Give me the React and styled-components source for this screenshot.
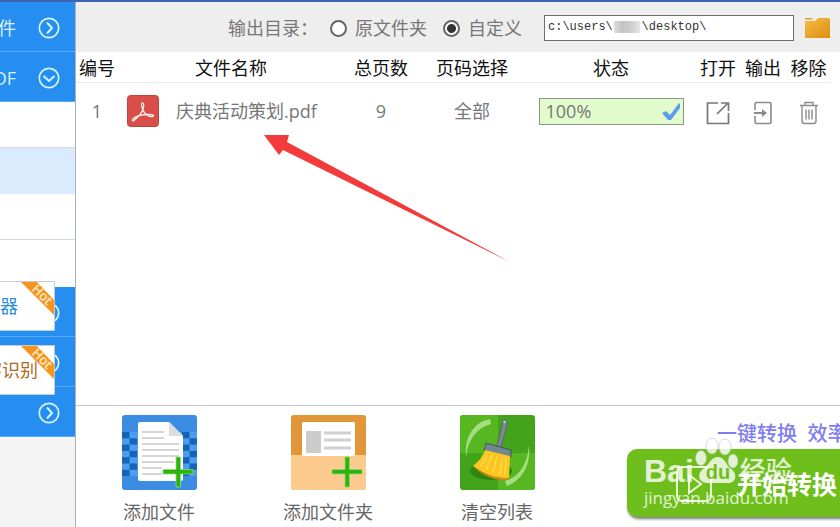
import React, { useState } from 'react';
import styled, { createGlobalStyle } from 'styled-components';

const GlobalStyle = createGlobalStyle`
  * {
    box-sizing: border-box;
  }
  body {
    margin: 0;
    background: #fff;
    font-family: "Open Sans", "Noto Sans CJK SC", sans-serif;
    font-size: 18px;
    line-height: 26px;
    color: #777;
  }
  button, input {
    font-family: inherit;
    font-size: inherit;
    line-height: inherit;
    color: inherit;
    margin: 0;
  }
  svg {
    flex: none;
  }
`

const Page = styled.div`
  position: relative;
  display: flex;
  min-height: 100vh;
  border-top: 2px solid #3f63b3;
  overflow: hidden;
`

const Sidebar = styled.nav`
  position: relative;
  flex: none;
  width: 76px;
  border-right: 1px solid #a9b3bd;
  background: #f3f3f3;
`

const Group = styled.button`
  display: flex;
  align-items: center;
  justify-content: flex-end;
  gap: 22px;
  width: 100%;
  height: 50px;
  padding: 2px 15px 0 0;
  border: 0;
  border-bottom: 1px solid #55aaf7;
  background: #268ef0;
  color: #d9f3ff;
  white-space: nowrap;
  overflow: hidden;
`

const SubItem = styled.a`
  display: block;
  height: ${p => (p.$last ? 47 : 46)}px;
  border-bottom: ${p => (p.$last ? 0 : 1)}px solid ${p => (p.$active ? '#d9ebfd' : '#d5d9dd')};
  background: ${p => (p.$active ? '#d9ebfd' : '#fff')};
`

const Promos = styled.div`
  position: absolute;
  top: 279px;
  left: 0;
  display: flex;
  flex-direction: column;
  gap: 14px;
`

const Promo = styled.a`
  position: relative;
  display: flex;
  align-items: center;
  justify-content: flex-end;
  width: 55px;
  height: 50px;
  padding-right: ${p => p.$pad}px;
  border: 1px solid #c3ccd4;
  border-left: 0;
  background: #fff;
  color: ${p => p.$color};
  text-decoration: none;
  white-space: nowrap;
  overflow: hidden;
`

const Ribbon = styled.svg`
  position: absolute;
  top: 0;
  right: 0;
`

const Main = styled.main`
  flex: 1;
  min-width: 0;
  display: flex;
  flex-direction: column;
`

const Toolbar = styled.div`
  display: flex;
  align-items: center;
  height: 50px;
  padding: 2px 10px 0 152px;
  background: #eee;
  white-space: nowrap;
`

const Choices = styled.div`
  display: flex;
  gap: 16px;
  margin-left: 12px;
`

const Choice = styled.label`
  display: flex;
  align-items: center;
  gap: 8px;
`

const Radio = styled.input`
  appearance: none;
  width: 17px;
  height: 17px;
  border: 2px solid #666;
  border-radius: 50%;
  background: #fff;
  &:checked {
    background: radial-gradient(circle, #333 4px, #fff 5px);
  }
`

const PathBox = styled.div`
  position: relative;
  flex: 1;
  min-width: 0;
  display: flex;
  margin: 0 10px 0 22px;
`

const PathInput = styled.input`
  width: 100%;
  height: 26px;
  padding: 0 3px 2px;
  border: 1px solid #6e6e6e;
  border-radius: 0;
  background: #fff;
  color: #333;
  font-family: "Liberation Mono", monospace;
  font-size: 12px;
`

const Smudge = styled.span`
  position: absolute;
  left: 70px;
  top: 6px;
  width: 26px;
  height: 12px;
  background: linear-gradient(90deg, #ddd, #c4c4c4 30%, #ccc 60%, #e4e4e4);
`

const IconButton = styled.button`
  display: inline-flex;
  padding: 0;
  border: 0;
  background: none;
  vertical-align: middle;
`

const Files = styled.table`
  width: calc(100% - 9px);
  table-layout: fixed;
  border-collapse: collapse;
`

const Th = styled.th`
  width: ${p => (p.$w ? p.$w + 'px' : 'auto')};
  height: 30px;
  padding: 3px 0 0;
  border-bottom: 1px solid #e8ebee;
  color: #111;
  font-weight: 400;
  text-align: center;
  white-space: nowrap;
`

const Td = styled.td`
  height: 58px;
  padding: 0;
  text-align: center;
`

const FileName = styled.div`
  display: flex;
  align-items: center;
  gap: 17px;
  padding-left: 9px;
  white-space: nowrap;
`

const Progress = styled.div`
  display: flex;
  align-items: center;
  justify-content: space-between;
  width: 145px;
  height: 27px;
  margin: 0 auto;
  padding: 0 1px 0 6px;
  border: 1px solid #8c9788;
  background: #e2fbcd;
`

const Footer = styled.footer`
  display: flex;
  height: 122px;
  margin-top: auto;
  padding-left: 38px;
  border-top: 1px solid #c6c6c6;
  overflow: hidden;
`

const Tools = styled.div`
  display: flex;
  flex: none;
  gap: 79px;
`

const Tool = styled.button`
  display: flex;
  flex-direction: column;
  align-items: center;
  gap: 9px;
  width: 90px;
  padding: 9px 0 0;
  border: 0;
  background: none;
  color: #666;
  white-space: nowrap;
`

const Action = styled.div`
  position: relative;
  flex: none;
  width: 240px;
  margin-left: 85px;
  padding-top: 13px;
`

const Slogan = styled.div`
  padding-left: 90px;
  color: #807df0;
  font-size: 20px;
  font-weight: 500;
  line-height: 30px;
  white-space: pre;
`

const Start = styled.button`
  display: flex;
  align-items: center;
  gap: 24px;
  width: 100%;
  height: 68px;
  padding: 2px 0 0 48px;
  border: 0;
  border-radius: 10px;
  background: #6fbf1c;
  box-shadow: 1px 2px 3px #777;
  color: #fff;
  font-size: 25px;
  font-weight: 700;
  white-space: nowrap;
`

const Watermark = styled.div`
  position: absolute;
  left: 17px;
  top: 29px;
  opacity: 0.8;
  color: #fff;
  pointer-events: none;
`

const Brand = styled.div`
  display: flex;
  align-items: flex-end;
  height: 52px;
  font-family: "Liberation Sans", "Noto Sans CJK SC", sans-serif;
  font-size: 32px;
  font-weight: 700;
  line-height: 32px;
`

const BrandZh = styled.span`
  font-size: 26px;
  font-weight: 500;
`

const Site = styled.div`
  font-size: 17px;
  line-height: 22px;
`

const Pointer = styled.svg`
  position: absolute;
  left: 263px;
  top: 132px;
  pointer-events: none;
`

const Circle = ({ down }) => (
  <svg width="22" height="22" viewBox="0 0 22 22" fill="none" stroke="#d5f5ff" strokeWidth="2">
    <circle cx="11" cy="11" r="9.700" strokeWidth="1.700" />
    <path d={down ? 'M5.5 9 L11 14 L16.5 9' : 'M9 5.5 L14 11 L9 16.5'} />
  </svg>
)

const Hot = () => (
  <Ribbon width="33" height="34" viewBox="0 0 33 34" aria-hidden="true">
    <path d="M0 0H16L33 18V33Z" fill="#f7941d" />
    <text x="21" y="17" fill="#ffe9c4" fontSize="13" fontFamily="Open Sans" fontWeight="600" textAnchor="middle" transform="rotate(45 21 13)">Hot</text>
  </Ribbon>
)

const Plus = () => (
  <path d="M54 42h4.500v12.500H71v4.500H58.500v13H54V59H41v-4.500h13z" fill="#2eb40e" stroke="#8fd873" strokeWidth=".8" />
)

const PdfIcon = () => (
  <svg width="32" height="32" viewBox="0 0 32 32">
    <rect x=".5" y=".5" width="31" height="31" rx="3" fill="#d84e49" stroke="#bd4540" />
    <path d="M15 8c2-1 2 3 1 6-1 4-6 9-9 11.500-1 .8-2 .3-1.500-.8 1-2 5-3.700 9-4.700 4-.7 11-.8 12 .5.6 1-1.500 1.500-4 .8-3-1-6-4.500-7-7.500-.7-2-1.500-5-.5-5.800z" fill="none" stroke="#fde8e5" strokeWidth="1.300" />
  </svg>
)

const FolderIcon = () => (
  <svg width="26" height="22" viewBox="0 0 26 22">
    <defs>
      <linearGradient id="fold" x1="0" y1="0" x2="1" y2="1">
        <stop offset="0" stopColor="#f6bd43" />
        <stop offset="1" stopColor="#dc8d13" />
      </linearGradient>
    </defs>
    <path d="M1 1h7l1 1.500H1z" fill="#e0a238" />
    <path d="M1 4h10l3-3h10q2 0 2 2v18H1z" fill="url(#fold)" />
  </svg>
)

const CheckIcon = () => (
  <svg width="22" height="21" viewBox="0 0 22 21">
    <path d="M2 12l4-2 4 4L19 2l1 1v4l-9 12H8z" fill="#5c9de8" />
  </svg>
)

const OpenIcon = () => (
  <svg width="24" height="24" viewBox="0 0 24 24" fill="none" stroke="#777" strokeWidth="1.700">
    <path d="M12 2H1.500v20.500h21V12M11 13L21.500 2.500M15 2h7.500v8" />
  </svg>
)

const ExportIcon = () => (
  <svg width="20" height="24" viewBox="0 0 20 24" fill="none" stroke="#8b8b8b" strokeWidth="1.600">
    <path d="M2 9V3q0-1.500 1.500-1.500h13q1.500 0 1.500 1.500v18q0 1.500-1.500 1.500h-13Q2 22.500 2 21v-6" />
    <path d="M1 12h10" strokeWidth="2" />
    <path d="M9 8l5 4-5 4z" fill="#8b8b8b" stroke="none" />
  </svg>
)

const TrashIcon = () => (
  <svg width="20" height="24" viewBox="0 0 20 24" fill="none" stroke="#8b8b8b" strokeWidth="1.400">
    <path d="M1 4.500h18M6 4V1.500h8V4M3 5v15q0 2.500 2.500 2.500h9Q17 22.500 17 20V5M7 8.500v10M10 8.500v10M13 8.500v10" />
  </svg>
)

const AddFileIcon = () => (
  <svg width="75" height="75" viewBox="0 0 75 75">
    <rect width="75" height="75" rx="3" fill="#3b8de4" />
    <path d="M0 17h75v44H0z" fill="#4b9df0" />
    {[0, 1, 2, 3, 4, 5, 6].map(r =>
      [0, 1, 8, 9].map(c => (r + c) % 2 === 0 && (
        <rect key={r + '-' + c} x={c * 7.5} y={17 + r * 6.3} width="7.500" height="6.300" fill="#1763b5" />
      ))
    )}
    <path d="M18 7h29l14 14v43q0 2-2 2H18q-2 0-2-2V9q0-2 2-2z" fill="#fff" />
    <path d="M47 7l14 14H47z" fill="#ddd" />
    <path d="M20 17h22M20 23h22M20 29h37M20 35h37M20 41h37M20 47h32M20 53h20M20 59h20" stroke="#d5d5d5" strokeWidth="2" />
    <Plus />
  </svg>
)

const AddFolderIcon = () => (
  <svg width="75" height="75" viewBox="0 0 75 75">
    <rect width="75" height="75" rx="3" fill="#e39638" />
    <rect x="11" y="7" width="53" height="36" rx="1" fill="#fff" />
    <path d="M15 16h15v22H15z" fill="#ccc" />
    <path d="M33 18h27M33 25h27M33 33h27" stroke="#d0d0d0" strokeWidth="3" />
    <path d="M0 40h11l2 1h49l2-1h11v32q0 3-3 3H3q-3 0-3-3z" fill="#fdcb8d" />
    <Plus />
  </svg>
)

const ClearIcon = () => (
  <svg width="75" height="75" viewBox="0 0 75 75">
    <rect width="75" height="75" rx="3" fill="#43a41c" />
    <path d="M3 0h35v38H0V3q0-3 3-3zM38 38h37v34q0 3-3 3H38z" fill="#56b720" />
    <ellipse cx="31" cy="56" rx="21" ry="9" fill="#2d8512" />
    <path d="M6 42C4 22 14 7 30 4l1 5C17 13 8 24 6 42zM69 31c2 20-8 35-22 40l-2-5c14-4 22-16 24-35z" fill="#a5dd83" />
    <path d="M43 5q5-1 4 5l-6 22-4-1 5-20z" fill="#7b8b91" stroke="#56666d" />
    <circle cx="44.500" cy="7" r="1.300" fill="#c6d0d2" />
    <path d="M26 28l25 7v7l-27-6z" fill="#6f8791" stroke="#435760" />
    <path d="M25 35l25 6-1 22q-18 2-36-12 9-7 12-16z" fill="#fdc51d" />
    <path d="M28 39l-8 13M32 40l-6 15M37 41l-4 17M42 42l-2 18M46 42l-1 18" stroke="#fbdc55" strokeWidth="1.500" />
    <path d="M13 51q16 14 36 12l-1 2Q27 66 13 51z" fill="#dd830e" />
  </svg>
)

const PlayIcon = () => (
  <svg width="38" height="36" viewBox="0 0 38 36" fill="none" stroke="#eaffd5" strokeWidth="2">
    <rect x="2" y="1" width="34" height="34" rx="5" />
    <path d="M14 9v18l12-9z" />
  </svg>
)

// the letters in the pad of the paw are the colour of the button behind it
const Paw = () => (
  <svg width="46" height="56" viewBox="0 0 46 56" fill="#fff" stroke="#bbb" strokeWidth=".7">
    <ellipse cx="7" cy="27" rx="5.500" ry="7.500" />
    <ellipse cx="18" cy="15" rx="6" ry="8" />
    <ellipse cx="31" cy="16" rx="6" ry="8" />
    <ellipse cx="39" cy="30" rx="5" ry="7" />
    <path d="M24 26c7 0 8 8 12 11 8 5 7 16-3 15H14C4 52 3 43 9 38c6-4 8-12 15-12z" stroke="none" />
    <text x="24" y="48" fill="#6fbf1c" stroke="none" fontSize="20" fontWeight="700" fontFamily="Liberation Sans" textAnchor="middle">du</text>
  </svg>
)

const tools = [
  { name: '添加文件', Icon: AddFileIcon },
  { name: '添加文件夹', Icon: AddFolderIcon },
  { name: '清空列表', Icon: ClearIcon },
]

const files = [
  { id: 1, name: '庆典活动策划.pdf', pages: 9, range: '全部', done: 100 },
]

const App = () => {
  const [target, setTarget] = useState('custom');
  const [path, setPath] = useState('c:\\users\\    \\desktop\\');
  return (
    <Page>
      <GlobalStyle />
      <Sidebar>
        <Group>件<Circle /></Group>
        <Group>DF<Circle down /></Group>
        <SubItem href="#" />
        <SubItem href="#" $active />
        <SubItem href="#" />
        <SubItem href="#" $last />
        <Group><Circle /></Group>
        <Group><Circle /></Group>
        <Group><Circle /></Group>
        <Promos>
          <Promo href="#" $color="#2a8fd8" $pad={36}>器<Hot /></Promo>
          <Promo href="#" $color="#b06a25" $pad={16}>字识别<Hot /></Promo>
        </Promos>
      </Sidebar>

      <Main>
        <Toolbar>
          <label htmlFor="path">输出目录：</label>
          <Choices>
            <Choice>
              <Radio type="radio" name="target" checked={target === 'source'} onChange={() => setTarget('source')} />
              原文件夹
            </Choice>
            <Choice>
              <Radio type="radio" name="target" checked={target === 'custom'} onChange={() => setTarget('custom')} />
              自定义
            </Choice>
          </Choices>
          <PathBox>
            <PathInput id="path" type="text" value={path} onChange={e => setPath(e.target.value)} />
            <Smudge />
          </PathBox>
          <IconButton aria-label="浏览"><FolderIcon /></IconButton>
        </Toolbar>

        <Files>
          <thead>
            <tr>
              <Th $w={42}>编号</Th>
              <Th>文件名称</Th>
              <Th $w={74}>总页数</Th>
              <Th $w={108}>页码选择</Th>
              <Th $w={170}>状态</Th>
              <Th $w={44}>打开</Th>
              <Th $w={46}>输出</Th>
              <Th $w={45}>移除</Th>
            </tr>
          </thead>
          <tbody>
            {files.map(file => (
              <tr key={file.id}>
                <Td>{file.id}</Td>
                <Td><FileName><PdfIcon />{file.name}</FileName></Td>
                <Td>{file.pages}</Td>
                <Td>{file.range}</Td>
                <Td><Progress>{file.done}%<CheckIcon /></Progress></Td>
                <Td><IconButton aria-label="打开"><OpenIcon /></IconButton></Td>
                <Td><IconButton aria-label="输出"><ExportIcon /></IconButton></Td>
                <Td><IconButton aria-label="移除"><TrashIcon /></IconButton></Td>
              </tr>
            ))}
          </tbody>
        </Files>

        <Footer>
          <Tools>
            {tools.map(({ name, Icon }) => (
              <Tool key={name}><Icon />{name}</Tool>
            ))}
          </Tools>
          <Action>
            <Slogan>一键转换  效率</Slogan>
            <Start><PlayIcon />开始转换</Start>
            <Watermark>
              <Brand>Bai<Paw /><BrandZh>经验</BrandZh></Brand>
              <Site>jingyan.baidu.com</Site>
            </Watermark>
          </Action>
        </Footer>
      </Main>

      <Pointer width="250" height="130" viewBox="0 0 250 130">
        <path d="M1 1H26L24 8L247 128L20 16L16 21Z" fill="#f33b3b" />
      </Pointer>
    </Page>
  )
}

export default App
